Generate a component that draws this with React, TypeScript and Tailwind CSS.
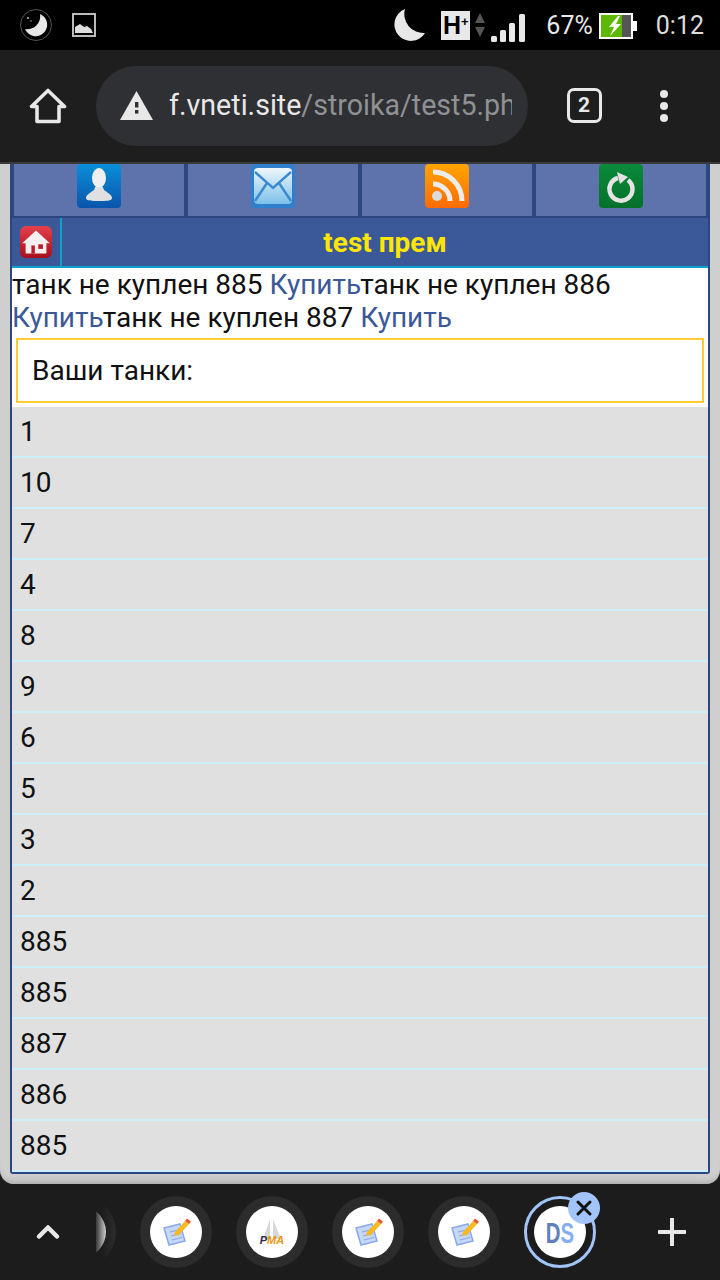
import { X, ChevronUp } from "lucide-react";

const rows = ["1", "10", "7", "4", "8", "9", "6", "5", "3", "2", "885", "885", "887", "886", "885"];

function StatusBar() {
  return (
    <div className="flex h-[50px] items-center bg-black text-[#e8e8e8]">
      <svg width="32" height="32" viewBox="0 0 32 32" className="ml-[20px] mb-[1px]">
        <circle cx="16" cy="16" r="15.5" fill="none" stroke="#555" strokeWidth="1" />
        <path d="M20 5 A11.5 11.5 0 1 1 5 20 A13 13 0 0 0 20 5Z" fill="#e8e8e8" />
        <circle cx="8" cy="9" r="1" fill="#bbb" />
        <circle cx="11" cy="12" r="0.7" fill="#bbb" />
      </svg>
      <svg width="24" height="24" viewBox="0 0 24 24" className="ml-[20px]">
        <rect x="1" y="1" width="22" height="22" fill="none" stroke="#bbb" strokeWidth="2" />
        <path d="M3 20 V14 L8 11 L12 14 L15 13 L19 16 L21 20 Z" fill="#ddd" />
      </svg>
      <svg width="34" height="34" viewBox="0 0 34 34" className="ml-auto">
        <path d="M13 1 A16.5 16.5 0 1 0 33 25 A19 19 0 0 1 13 1Z" fill="#e8e8e8" />
      </svg>
      <div className="ml-[15px] flex h-[29px] w-[29px] items-center justify-center bg-[#e8e8e8] font-['Liberation_Sans',sans-serif] text-[25px] leading-none font-bold text-black">
        H<span className="mb-[8px] text-[13px] leading-none">+</span>
      </div>
      <svg width="12" height="26" viewBox="0 0 12 26" className="ml-[4px]">
        <path d="M6 1 L11 11 H1 Z M1 15 H11 L6 25 Z" fill="#555" />
      </svg>
      <svg width="34" height="30" viewBox="0 0 34 30" className="mt-[5px] ml-[5px]">
        <rect x="0" y="23" width="6" height="6" rx="1.5" fill="#e8e8e8" />
        <rect x="9" y="17" width="6" height="12" rx="1.5" fill="#e8e8e8" />
        <rect x="18" y="10" width="6" height="19" rx="1.5" fill="#e8e8e8" />
        <rect x="28" y="1" width="6" height="28" rx="1.5" fill="#e8e8e8" />
      </svg>
      <span className="ml-[21px] text-[25px] leading-none">67%</span>
      <svg width="38" height="26" viewBox="0 0 38 26" className="mt-[2px] ml-[6px]">
        <rect x="1" y="1" width="32" height="24" fill="#555" stroke="#fff" strokeWidth="2" />
        <rect x="2" y="2" width="21" height="22" fill="#5cb800" />
        <rect x="33" y="8" width="5" height="10" fill="#fff" />
        <path d="M19 3 L10 14 H15 L11 23 L22 11 H17 L21 3Z" fill="#fff" />
      </svg>
      <span className="mr-[16px] ml-[19px] text-[25px] leading-none text-[#dddddd]">0:12</span>
    </div>
  );
}

function Toolbar() {
  return (
    <div className="flex h-[114px] items-center border-b-2 border-[#3a3a3a] bg-[#1e1e1e] pb-[1px]">
      <div className="flex w-[96px] justify-center">
        <svg width="38" height="38" viewBox="0 0 38 38" className="mt-[1px]" fill="none" stroke="#e8e8e8" strokeWidth="3.6" strokeLinejoin="round" strokeLinecap="round">
          <path d="M2.5 19.5 L19 3.5 L35.5 19.5 H30 V34.5 H8 V19.5 Z" />
        </svg>
      </div>
      <div className="flex h-[80px] w-[432px] items-center rounded-full bg-[#2e3033] pr-[16px] pl-[24px]">
        <svg width="33" height="29" viewBox="0 0 33 29" className="shrink-0">
          <path d="M16.5 0 L33 29 H0 Z" fill="#e8e8e8" />
          <rect x="15" y="11" width="3.4" height="5.5" fill="#2e3033" />
          <rect x="15" y="19" width="3.4" height="3.6" fill="#2e3033" />
        </svg>
        <div className="ml-[16px] overflow-hidden whitespace-nowrap text-[28.6px] text-[#e8e8e8]">
          f.vneti.site<span className="text-[#8f9193]">/stroika/test5.php</span>
        </div>
      </div>
      <div className="flex w-[112px] justify-center">
        <div className="flex h-[35px] w-[35px] items-center justify-center rounded-[7px] border-[3px] border-[#e8e8e8] text-[21px] leading-none font-bold text-[#e8e8e8]">
          2
        </div>
      </div>
      <div className="flex w-[48px] justify-center">
        <svg width="10" height="34" viewBox="0 0 10 34" className="shrink-0" fill="#e8e8e8">
          <circle cx="5" cy="5" r="4" />
          <circle cx="5" cy="17" r="4" />
          <circle cx="5" cy="29" r="4" />
        </svg>
      </div>
    </div>
  );
}

function NavIcon({ from, to, children }: { from: string; to: string; children: React.ReactNode }) {
  return (
    <div className="flex h-[52px] flex-1 justify-center bg-[#5e73ab]">
      <div
        className="flex h-[44px] w-[44px] items-center justify-center overflow-hidden rounded-[4px]"
        style={{ background: `linear-gradient(${from}, ${to})` }}
      >
        {children}
      </div>
    </div>
  );
}

function Nav() {
  return (
    <div className="flex gap-[4px] px-[2px] pb-[2px]">
      <NavIcon from="#0a8fd8" to="#0a55ab">
        <svg width="44" height="44" viewBox="0 0 44 44">
          <ellipse cx="22" cy="14" rx="7" ry="10" fill="#f0f0f0" />
          <path d="M18 23 C18 28 9 29 9 34 C9 37 15 37 22 37 C29 37 35 37 35 34 C35 29 26 28 26 23Z" fill="#e0e0e0" />
        </svg>
      </NavIcon>
      <NavIcon from="#2f7fcc" to="#2f7fcc">
        <svg width="44" height="44" viewBox="0 0 44 44">
          <defs>
            <linearGradient id="mail" x1="0" x2="0" y1="0" y2="1">
              <stop offset="0" stopColor="#eef7fc" />
              <stop offset="1" stopColor="#7cc0e8" />
            </linearGradient>
          </defs>
          <rect x="3" y="4" width="38" height="36" rx="4" fill="url(#mail)" />
          <path d="M4 8 L22 24 L40 8 M4 37 L16 19 M40 37 L28 19" fill="none" stroke="#3a8ad0" strokeWidth="2.4" />
        </svg>
      </NavIcon>
      <NavIcon from="#ffa500" to="#ff6a00">
        <svg width="44" height="44" viewBox="0 0 44 44" fill="none" stroke="#ececec" strokeWidth="5">
          <path d="M8 20 A17 17 0 0 1 25 37" />
          <path d="M8 8 A29 29 0 0 1 37 37" />
          <circle cx="12" cy="32" r="5" fill="#dcdcdc" stroke="none" />
        </svg>
      </NavIcon>
      <NavIcon from="#0a8a3a" to="#06702a">
        <svg width="44" height="44" viewBox="0 0 44 44" fill="none">
          <path d="M19 14 A11.5 11.5 0 1 0 29 16" stroke="#e4e4e4" strokeWidth="4.5" />
          <path d="M18 8 L29 13 L21 20 Z" fill="#e4e4e4" />
        </svg>
      </NavIcon>
    </div>
  );
}

function TitleBar() {
  return (
    <div className="flex h-[50px] border-b-2 border-[#0ea0cf] bg-[#3b5898]">
      <div className="flex w-[50px] items-center justify-center border-r-2 border-[#0ea0cf]">
        <div className="flex h-[32px] w-[32px] items-center justify-center rounded-[6px] bg-[linear-gradient(#e4404a,#a80f1c)]">
          <svg width="30" height="28" viewBox="0 0 26 24">
            <path d="M13 2 L25 13 H22 V22 H4 V13 H1 Z" fill="#f4f0f0" />
            <rect x="9" y="15" width="3" height="7" fill="#b81c28" />
            <rect x="15" y="14" width="4" height="4" fill="#b81c28" />
          </svg>
        </div>
      </div>
      <div className="flex flex-1 items-center justify-center pt-[1px] font-['Roboto',sans-serif] text-[28px] font-bold text-[#ffe600]">
        test прем
      </div>
    </div>
  );
}

function Tabs() {
  const tab = (icon: React.ReactNode, key: number) => (
    <div key={key} className="flex w-[96px] shrink-0 justify-center">
      <div className="flex h-[72px] w-[72px] items-center justify-center rounded-full bg-[#2c2c2c]">
        <div className="flex h-[52px] w-[52px] items-center justify-center rounded-full bg-white">{icon}</div>
      </div>
    </div>
  );
  const editIcon = (
    <svg width="30" height="30" viewBox="0 0 30 30">
      <path d="M3 11 L19 7 L24 24 L8 28 Z" fill="#c5d8f8" stroke="#8aa9ea" strokeWidth="1.5" />
      <path d="M9 15 L19 12.5 M10 19 L20 16.5 M11 23 L21 20.5" stroke="#8aa9ea" strokeWidth="1.2" />
      <path d="M14 15 L24 4 L28 7 L18 18 L13 19 Z" fill="#f5b921" />
      <path d="M24 4 L26 1.5 L30 4.5 L28 7 Z" fill="#ee5533" />
    </svg>
  );
  return (
    <div className="relative flex h-[96px] items-center bg-[#1c1c1c]">
      <div className="flex w-[96px] shrink-0 justify-center">
        <ChevronUp size={36} strokeWidth={3} color="#e8e8e8" />
      </div>
      <div className="flex w-[528px] overflow-hidden">
        <div className="-ml-[64px] flex">
          <div className="flex w-[96px] shrink-0 justify-center">
            <div className="flex h-[72px] w-[72px] items-center justify-center rounded-full bg-[linear-gradient(90deg,#1c1c1c_80%,#2c2c2c_100%)]">
              <div className="h-[52px] w-[52px] rounded-full bg-[linear-gradient(90deg,#333_80%,#cfcfcf_100%)]" />
            </div>
          </div>
          {tab(editIcon, 1)}
          {tab(
            <div className="flex flex-col items-center">
              <svg width="26" height="20" viewBox="0 0 26 20">
                <path d="M11 0 L4 20 H11 Z M14 0 V20 H22 Z" fill="#d8d8d8" />
              </svg>
              <span className="-mt-[4px] font-['Liberation_Sans',sans-serif] text-[11px] leading-none font-bold italic">
                <span className="text-[#2c2c50]">P</span>
                <span className="text-[#e8960c]">MA</span>
              </span>
            </div>,
            2
          )}
          {tab(editIcon, 3)}
          {tab(editIcon, 4)}
          <div className="flex w-[96px] shrink-0 justify-center">
            <div className="flex h-[72px] w-[72px] items-center justify-center rounded-full border-[3px] border-[#a2c4f8]">
              <div className="flex h-[52px] w-[52px] items-center justify-center rounded-full bg-white font-['Liberation_Sans',sans-serif] text-[30px] font-bold text-[#86aef0]">
                <span className="scale-x-[0.68]">
                  <span className="text-[#5f80b8]">D</span>S
                </span>
              </div>
            </div>
          </div>
        </div>
      </div>
      <div className="absolute top-[8px] left-[568px] flex h-[32px] w-[32px] items-center justify-center rounded-full bg-[#a2c4f8]">
        <X size={24} strokeWidth={3} color="#111" />
      </div>
      <div className="flex flex-1 justify-center">
        <svg width="28" height="28" viewBox="0 0 28 28" fill="#e8e8e8">
          <rect x="12" y="0" width="4" height="28" />
          <rect x="0" y="12" width="28" height="4" />
        </svg>
      </div>
    </div>
  );
}

export default function App() {
  return (
    <div className="flex h-[1280px] w-[720px] flex-col overflow-hidden bg-[#1c1c1c] font-['Roboto',sans-serif]">
      <StatusBar />
      <Toolbar />
      <main className="h-[1020px] rounded-b-[14px] bg-[#cfcfcf] px-[10px] shadow-[inset_0_-8px_6px_-6px_#aaa]">
        <div className="h-[1010px] rounded-b-[3px] border-x-2 border-b-2 border-[#2c4780] bg-[#2c4780]">
          <Nav />
          <TitleBar />
          <div className="bg-white text-[28px] leading-[33px] text-[#111]">
            <div className="h-[66px]">
              танк не куплен 885 <span className="text-[#3b5898]">Купить</span>танк не куплен 886{" "}
              <span className="text-[#3b5898]">Купить</span>танк не куплен 887{" "}
              <span className="text-[#3b5898]">Купить</span>
            </div>
            <div className="mx-[4px] mt-[4px] flex h-[65px] items-center border-2 border-[#ffcc33] px-[14px]">
              Ваши танки:
            </div>
            <div className="h-[4px]" />
          </div>
          {rows.map((row, i) => (
            <div
              key={i}
              className="flex h-[51px] items-center border-b-2 border-[#cdeefb] bg-[#e0e0e0] pl-[8px] text-[28px] text-[#111]"
            >
              {row}
            </div>
          ))}
        </div>
      </main>
      <Tabs />
    </div>
  );
}
